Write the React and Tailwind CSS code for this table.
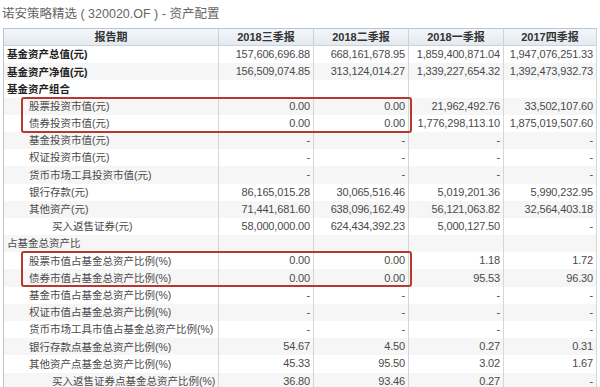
const COLS = ['2018三季报', '2018二季报', '2018一季报', '2017四季报'];

const ROWS = [
  { label: '基金资产总值(元)', level: 0, bold: true, v: ['157,606,696.88', '668,161,678.95', '1,859,400,871.04', '1,947,076,251.33'] },
  { label: '基金资产净值(元)', level: 0, bold: true, v: ['156,509,074.85', '313,124,014.27', '1,339,227,654.32', '1,392,473,932.73'] },
  { label: '基金资产组合', level: 0, bold: true, v: ['', '', '', ''] },
  { label: '股票投资市值(元)', level: 1, v: ['0.00', '0.00', '21,962,492.76', '33,502,107.60'] },
  { label: '债券投资市值(元)', level: 1, v: ['0.00', '0.00', '1,776,298,113.10', '1,875,019,507.60'] },
  { label: '基金投资市值(元)', level: 1, v: ['-', '-', '-', '-'] },
  { label: '权证投资市值(元)', level: 1, v: ['-', '-', '-', '-'] },
  { label: '货币市场工具投资市值(元)', level: 1, v: ['-', '-', '-', '-'] },
  { label: '银行存款(元)', level: 1, v: ['86,165,015.28', '30,065,516.46', '5,019,201.36', '5,990,232.95'] },
  { label: '其他资产(元)', level: 1, v: ['71,441,681.60', '638,096,162.49', '56,121,063.82', '32,564,403.18'] },
  { label: '买入返售证券(元)', level: 2, v: ['58,000,000.00', '624,434,392.23', '5,000,127.50', '-'] },
  { label: '占基金总资产比', level: 0, v: ['', '', '', ''] },
  { label: '股票市值占基金总资产比例(%)', level: 1, v: ['0.00', '0.00', '1.18', '1.72'] },
  { label: '债券市值占基金总资产比例(%)', level: 1, v: ['0.00', '0.00', '95.53', '96.30'] },
  { label: '基金市值占基金总资产比例(%)', level: 1, v: ['-', '-', '-', '-'] },
  { label: '权证市值占基金总资产比例(%)', level: 1, v: ['-', '-', '-', '-'] },
  { label: '货币市场工具市值占基金总资产比例(%)', level: 1, v: ['-', '-', '-', '-'] },
  { label: '银行存款点基金总资产比例(%)', level: 1, v: ['54.67', '4.50', '0.27', '0.31'] },
  { label: '其他资产点基金总资产比例(%)', level: 1, v: ['45.33', '95.50', '3.02', '1.67'] },
  { label: '买入返售证券点基金总资产比例(%)', level: 2, v: ['36.80', '93.46', '0.27', '-'] },
];

const indent = ['pl-[3px]', 'pl-[25px]', 'pl-[48px]'];

function Row({ row, index }) {
  return (
    <div className={`flex h-[17.2px] items-center ${index % 2 === 1 ? 'bg-[#f6f6f6]' : 'bg-white'}`}>
      <div
        className={`w-[215px] shrink-0 h-full flex items-center whitespace-nowrap text-[10.5px] border-r border-[#d6d6d6] ${indent[row.level]} ${
          row.bold ? 'font-bold text-[#222]' : 'text-[#4a4a4a]'
        }`}
      >
        {row.label}
      </div>
      {row.v.map((val, i) => (
        <div
          key={i}
          className={`h-full flex items-center justify-end pr-[3px] text-[11px] tracking-[-0.15px] text-[#4a4a4a] border-r border-[#d6d6d6] ${
            i === 3 ? 'w-[93px]' : 'w-[95px]'
          } shrink-0`}
        >
          {val}
        </div>
      ))}
    </div>
  );
}

export default function App() {
  return (
    <div className="w-[600px] h-[387px] overflow-hidden bg-white font-['Liberation_Sans','Noto_Sans_CJK_SC',sans-serif]">
      <div className="h-[28px] pl-[2px] pt-[4px] text-[12.5px] leading-[20px] text-[#666]">
        诺安策略精选 ( 320020.OF ) - 资产配置
      </div>
      <div className="relative ml-[3px] w-[594px] border-l border-t border-[#b9c5d3] leading-none">
        <div className="flex h-[17px] items-center bg-gradient-to-b from-[#f4f7fa] to-[#e3e9f0] border-b border-[#c9d3de] font-bold text-[11px] text-[#333]">
          <div className="w-[215px] shrink-0 h-full flex items-center justify-center border-r border-[#c9d3de]">报告期</div>
          {COLS.map((c, i) => (
            <div
              key={c}
              className={`h-full flex items-center justify-center border-r border-[#c9d3de] shrink-0 ${
                i === 3 ? 'w-[93px]' : 'w-[95px]'
              }`}
            >
              {c}
            </div>
          ))}
        </div>
        {ROWS.map((r, i) => (
          <Row key={r.label} row={r} index={i} />
        ))}

        {/* highlight boxes */}
        <div className="absolute left-[17px] top-[68px] w-[391px] h-[36px] border-2 border-[#b5392f] rounded-[3px]" />
        <div className="absolute left-[17px] top-[222px] w-[391px] h-[36px] border-2 border-[#b5392f] rounded-[3px]" />
      </div>
    </div>
  );
}
